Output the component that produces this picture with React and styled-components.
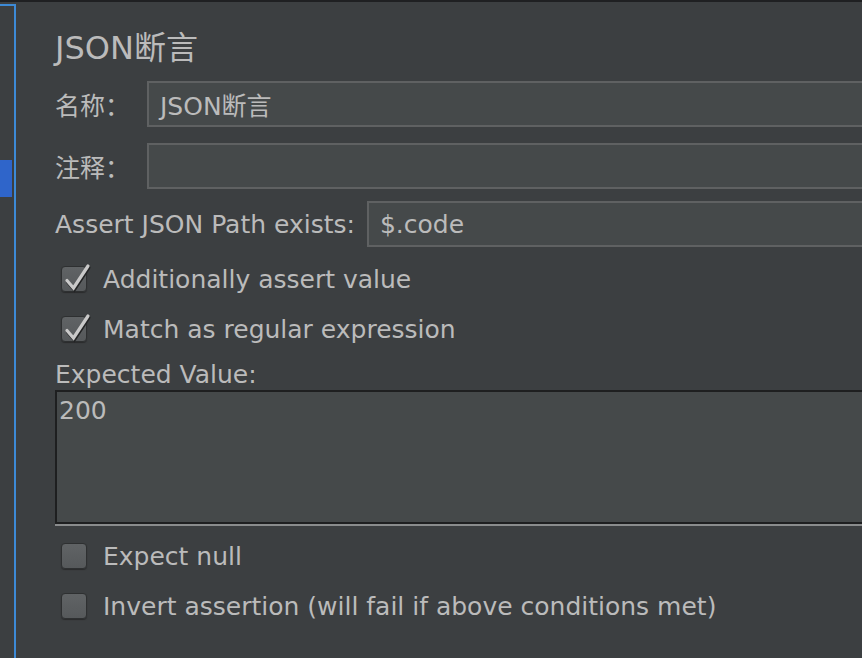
import React from 'react'
import styled, { createGlobalStyle } from 'styled-components'

const GlobalStyle = createGlobalStyle`
  html, body {
    margin: 0;
    padding: 0;
    background: #3c3f41;
  }
`

const Frame = styled.div`
  width: 862px;
  height: 658px;
  overflow: hidden;
  display: flex;
  flex-direction: column;
  background: #3c3f41;
  font-family: "DejaVu Sans", "Noto Sans CJK SC", sans-serif;
  color: #bbbbbb;
`

const TopStrip = styled.div`
  height: 2px;
  flex-shrink: 0;
  background: #1f2022;
`

const Body = styled.div`
  flex: 1;
  display: flex;
`

const SidePanel = styled.div`
  width: 14px;
  margin-top: 2px;
  border-top: 2px solid #3d8ad6;
  border-right: 2px solid #3d8ad6;
  padding-top: 154px;
  flex-shrink: 0;
`

const SideSelected = styled.div`
  width: 12px;
  height: 37px;
  background: #2f65ca;
`

const Content = styled.div`
  flex: 1;
  padding: 24px 0 0 39px;
  display: flex;
  flex-direction: column;
  min-width: 0;
`

const Title = styled.h1`
  margin: 0;
  height: 44px;
  font-size: 32px;
  font-weight: normal;
  line-height: 44px;
`

const FieldRow = styled.div`
  display: flex;
  align-items: center;
  gap: ${(p) => p.gap || 0}px;
  margin-top: ${(p) => p.top}px;
`

const Label = styled.span`
  font-size: 25px;
  white-space: nowrap;
  width: ${(p) => (p.width ? `${p.width}px` : 'auto')};
  flex-shrink: 0;
`

const Input = styled.div`
  flex: 1;
  height: 42px;
  box-sizing: content-box;
  border: 2px solid #5f6162;
  border-right: none;
  background: #45494a;
  display: flex;
  align-items: center;
  padding-left: 11px;
  font-size: 25px;
  white-space: nowrap;
`

const CheckRow = styled.label`
  display: flex;
  align-items: center;
  height: 30px;
  margin-top: ${(p) => p.top}px;
  padding-left: 6px;
  font-size: 25px;
`

const Box = styled.span`
  position: relative;
  width: 24px;
  height: 24px;
  border-radius: 4px;
  background: linear-gradient(#606365, #56595b);
  border: 1px solid #2e3031;
  box-shadow: 0 1px 1px #2a2b2c;
  margin-right: 16px;
  flex-shrink: 0;
`

const Tick = styled.svg`
  position: absolute;
  left: 0;
  top: -4px;
  overflow: visible;
`

const FieldTitle = styled.div`
  font-size: 25px;
  margin-top: 16px;
  height: 30px;
  line-height: 30px;
`

const TextArea = styled.div`
  margin-top: 0;
  height: 126px;
  border: 2px solid #1e1f20;
  border-right: none;
  box-shadow: 0 2px 0 #8a8c8d;
  background: #45494a;
  padding: 4px 0 0 2px;
  font-size: 25px;
  line-height: 30px;
`

function Check({ checked, children, top }) {
  return (
    <CheckRow top={top}>
      <Box>
        {checked && (
          <Tick width="26" height="30" viewBox="0 0 26 30">
            <path d="M5 17.5 L11.5 25 L26 3" fill="none" stroke="#232425" strokeWidth="3.4" strokeLinecap="round" transform="translate(0.8 1.6)" />
            <path d="M5 17.5 L11.5 25 L26 3" fill="none" stroke="#c9c9c9" strokeWidth="3.2" strokeLinecap="round" />
          </Tick>
        )}
      </Box>
      {children}
    </CheckRow>
  )
}

export default function App() {
  return (
    <Frame>
      <GlobalStyle />
      <TopStrip />
      <Body>
        <SidePanel>
          <SideSelected />
        </SidePanel>
        <Content>
          <Title>JSON断言</Title>
          <FieldRow top={11}>
            <Label width={92}>名称：</Label>
            <Input>JSON断言</Input>
          </FieldRow>
          <FieldRow top={16}>
            <Label width={92}>注释：</Label>
            <Input />
          </FieldRow>
          <FieldRow top={12} gap={12}>
            <Label>Assert JSON Path exists:</Label>
            <Input>$.code</Input>
          </FieldRow>
          <Check checked top={17}>Additionally assert value</Check>
          <Check checked top={20}>Match as regular expression</Check>
          <FieldTitle>Expected Value:</FieldTitle>
          <TextArea>200</TextArea>
          <Check top={17}>Expect null</Check>
          <Check top={20}>Invert assertion (will fail if above conditions met)</Check>
        </Content>
      </Body>
    </Frame>
  )
}
